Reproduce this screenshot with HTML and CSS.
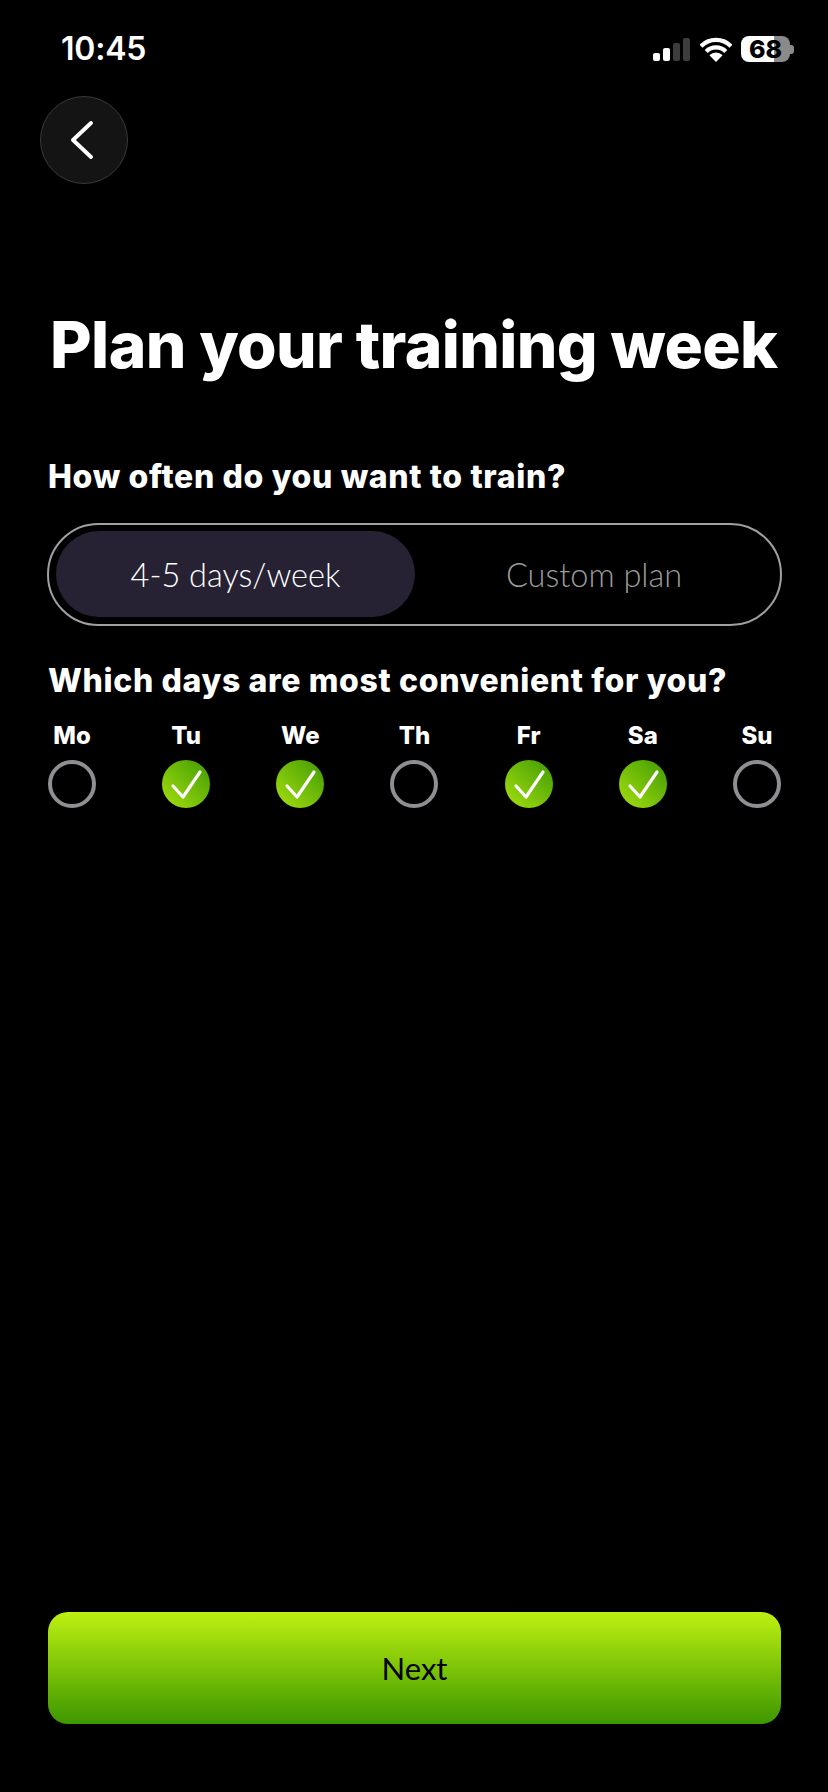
FILE: index.html
```html
<!DOCTYPE html>
<html lang="en">
<head>
<meta charset="utf-8">
<title>Plan your training week</title>
<link rel="stylesheet" href="styles.css">
</head>
<body>
<main class="screen">
  <header class="status">
    <span class="time">10:45</span>
    <div class="indicators">
      <div class="signal">
        <i class="bar b1"></i><i class="bar b2"></i><i class="bar b3 dim"></i><i class="bar b4 dim"></i>
      </div>
      <svg class="wifi" width="32" height="25" viewBox="0 0 32 25" aria-hidden="true">
        <path d="M1 9.2 A21 21 0 0 1 31 9.2 M6.2 14.4 A14 14 0 0 1 25.8 14.4" fill="none" stroke="#fff" stroke-width="4.2"/>
        <path d="M16 25 L9.4 18.2 A9.4 9.4 0 0 1 22.6 18.2 Z" fill="#fff"/>
      </svg>
      <div class="battery"><span class="level">68</span></div>
      <i class="nub"></i>
    </div>
  </header>

  <button class="back" aria-label="Back">
    <svg width="24" height="38" viewBox="0 0 24 38" aria-hidden="true">
      <path d="M21 2 L3 19 L21 36" fill="none" stroke="#fff" stroke-width="3.8" stroke-linecap="round" stroke-linejoin="round"/>
    </svg>
  </button>

  <h1 class="title">Plan your training week</h1>

  <h2 class="label first">How often do you want to train?</h2>
  <div class="toggle">
    <span class="option active">4-5 days/week</span>
    <span class="option">Custom plan</span>
  </div>

  <h2 class="label second">Which days are most convenient for you?</h2>
  <div class="days">
    <div class="day"><span class="name">Mo</span><span class="radio"></span></div>
    <div class="day"><span class="name">Tu</span><span class="radio on"><svg width="48" height="48" viewBox="0 0 48 48" aria-hidden="true"><path d="M11 26 L21 37 L38 12" fill="none" stroke="#fff" stroke-width="3.2" stroke-linecap="round" stroke-linejoin="round"/></svg></span></div>
    <div class="day"><span class="name">We</span><span class="radio on"><svg width="48" height="48" viewBox="0 0 48 48" aria-hidden="true"><path d="M11 26 L21 37 L38 12" fill="none" stroke="#fff" stroke-width="3.2" stroke-linecap="round" stroke-linejoin="round"/></svg></span></div>
    <div class="day"><span class="name">Th</span><span class="radio"></span></div>
    <div class="day"><span class="name">Fr</span><span class="radio on"><svg width="48" height="48" viewBox="0 0 48 48" aria-hidden="true"><path d="M11 26 L21 37 L38 12" fill="none" stroke="#fff" stroke-width="3.2" stroke-linecap="round" stroke-linejoin="round"/></svg></span></div>
    <div class="day"><span class="name">Sa</span><span class="radio on"><svg width="48" height="48" viewBox="0 0 48 48" aria-hidden="true"><path d="M11 26 L21 37 L38 12" fill="none" stroke="#fff" stroke-width="3.2" stroke-linecap="round" stroke-linejoin="round"/></svg></span></div>
    <div class="day"><span class="name">Su</span><span class="radio"></span></div>
  </div>

  <button class="next">Next</button>
</main>
</body>
</html>
```
FILE: styles.css
```css
* { box-sizing: border-box; }
html, body { margin: 0; background: #000; }
.screen {
  width: 828px;
  height: 1792px;
  padding: 0 47px 68px 48px;
  display: flex;
  flex-direction: column;
  background: #000;
  color: #fff;
  font-family: Inter, "Liberation Sans", sans-serif;
}
.status {
  height: 96px;
  padding: 30px 0 0 13px;
  margin-right: -13px;
  display: flex;
  justify-content: space-between;
  align-items: flex-start;
}
.time { font-size: 32px; font-weight: 600; line-height: 38px; letter-spacing: -0.2px; }
.indicators { display: flex; align-items: center; height: 32px; margin-top: 3px; }
.signal { display: flex; align-items: flex-end; gap: 3px; height: 23px; margin-right: 10px; }
.bar { display: block; width: 7px; border-radius: 2px; background: #fff; }
.b1 { height: 8px; }
.b2 { height: 13px; }
.b3 { height: 18px; }
.b4 { height: 23px; }
.dim { background: #3d3d3d; }
.wifi { margin-right: 9px; }
.battery {
  width: 49px;
  height: 26px;
  border-radius: 8px;
  background: linear-gradient(90deg, #fff 0 67%, #8a8a8a 67% 100%);
  display: flex;
  align-items: center;
  justify-content: center;
}
.level { color: #000; font-size: 25px; font-weight: 800; line-height: 26px; }
.nub { display: block; width: 4px; height: 9px; border-radius: 0 3px 3px 0; background: #8a8a8a; }
.back {
  width: 88px;
  height: 88px;
  margin-left: -8px;
  padding: 0 4px 0 0;
  display: flex;
  align-items: center;
  justify-content: center;
  border-radius: 50%;
  border: 1px solid #3a3a3a;
  background: #141414;
}
.title {
  margin: 125px 0 0 2px;
  font-size: 64px;
  line-height: 72px;
  font-weight: 800;
  letter-spacing: -0.6px;
  white-space: nowrap;
}
.label {
  margin: 0;
  font-size: 32px;
  line-height: 40px;
  font-weight: 800;
  letter-spacing: 0.65px;
  white-space: nowrap;
}
.first { margin-top: 76px; }
.second { margin-top: 35px; }
.toggle {
  margin: 26px -1px 0;
  height: 103px;
  padding: 6px 7px 7px;
  display: grid;
  grid-template-columns: 359px 1fr;
  border: 2px solid #a0a0a4;
  border-radius: 52px;
}
.option {
  display: flex;
  align-items: center;
  justify-content: center;
  font-family: Lato, Inter, sans-serif;
  font-size: 32.5px;
  font-weight: 300;
  color: #9c9c9c;
}
.active { color: #fff; background: #262233; border-radius: 44px; }
.days { margin-top: 20px; display: flex; justify-content: space-between; }
.day { width: 48px; display: flex; flex-direction: column; align-items: center; gap: 9px; }
.name { font-size: 24px; line-height: 30px; font-weight: 800; white-space: nowrap; }
.radio { display: block; width: 48px; height: 48px; border-radius: 50%; border: 4px solid #8e8e93; }
.on { border: 0; background: linear-gradient(45deg, #a6e00f, #3f9a03); }
.radio svg { display: block; }
.next {
  margin-top: auto;
  height: 112px;
  border: 0;
  border-radius: 20px;
  background: linear-gradient(180deg, #bef011, #3d9700);
  color: #000;
  font-family: Lato, Inter, sans-serif;
  font-size: 31px;
  font-weight: 400;
}
```
